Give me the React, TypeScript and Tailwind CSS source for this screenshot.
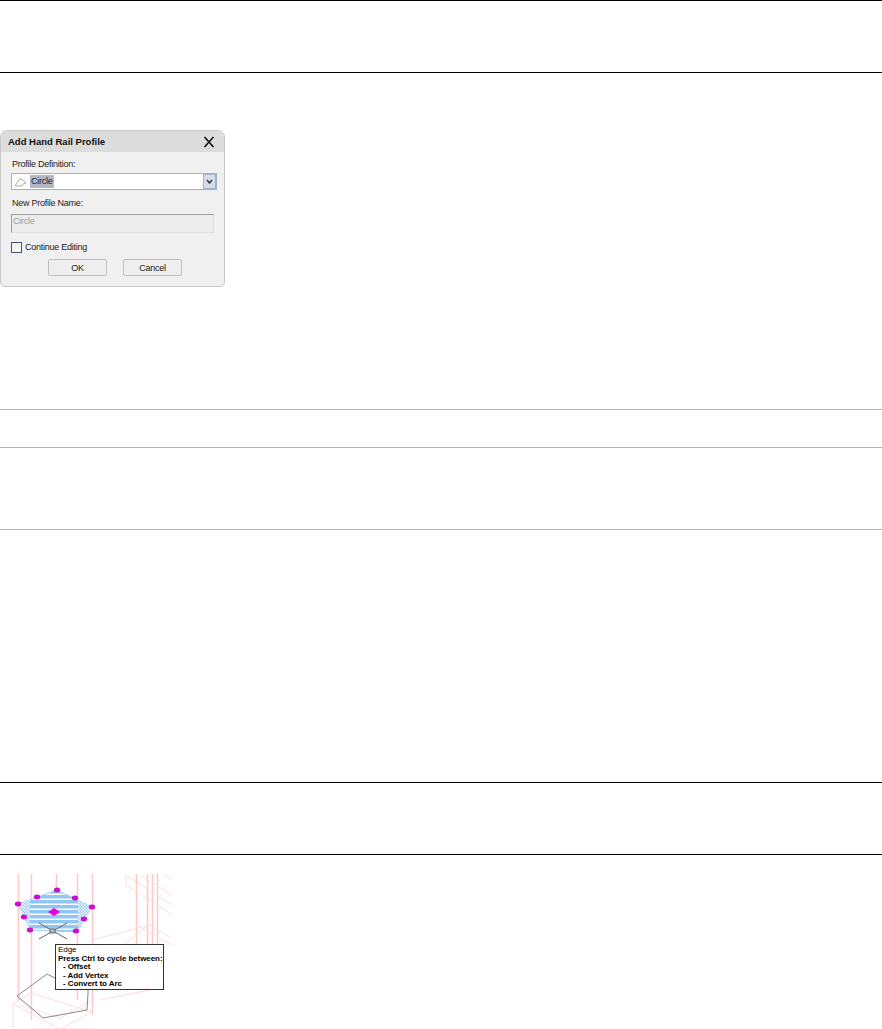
// Manual page: rules, the Add Hand Rail Profile dialog and the edge grip figure
const FONT = "font-['Liberation_Sans',Arial,sans-serif]";

function HandRailDialog() {
  return (
    <div className={`w-[225px] h-[157px] rounded-t-[7px] rounded-b-[5px] border border-[#c8c8c8] bg-[#f0f0f0] overflow-hidden text-[9px] leading-[12px] tracking-[-0.25px] text-[#222] ${FONT}`}>
      <div className="h-[21px] bg-[#dcdcdc] flex items-center justify-between pl-[7px] pr-[9px]">
        <span className="font-bold text-[#111] text-[9.5px] tracking-normal">Add Hand Rail Profile</span>
        <svg width="12" height="12" viewBox="0 0 12 12" stroke="#111" strokeWidth="1.6">
          <path d="M1.5 1 L10.5 11 M10.5 1 L1.5 11" />
        </svg>
      </div>
      <div className="pl-[10px] pr-[8px] pt-[6px] flex flex-col">
        <div className="h-[12px] pl-[1px]">Profile Definition:</div>
        <div className="mt-[3px] h-[17px] w-[206px] border border-[#9db4c8] bg-white flex items-center pl-[2px]">
          <svg width="14" height="10" viewBox="0 0 14 10" fill="none" stroke="#aaa" strokeWidth="1">
            <path d="M1 9 L6 1.5 L9 3 L12 6 L9 7 L8 9 Z" />
          </svg>
          <span className="ml-[2px] bg-[#b4b8c4] px-[1px] h-[13px] leading-[13px]">Circle</span>
          <div className="ml-auto w-[13px] h-[15px] bg-[#d8dce8] border border-[#a8b0c8] flex items-center justify-center">
            <svg width="7" height="5" viewBox="0 0 7 5" fill="none" stroke="#334" strokeWidth="1.5">
              <path d="M1 1 L3.5 4 L6 1" />
            </svg>
          </div>
        </div>
        <div className="mt-[7px] h-[12px] pl-[1px]">New Profile Name:</div>
        <div className="mt-[5px] h-[19px] w-[203px] border-t border-l border-[#a0a0a0] border-r border-r-[#e0e0e0] border-b border-b-[#e0e0e0] bg-[#ececec] pl-[1px] text-[#a0a0a0]">
          Circle
        </div>
        <div className="mt-[8px] flex items-center gap-[3px]">
          <div className="w-[11px] h-[11px] border border-[#3c5a78] bg-[#f4f4f4]" />
          <span>Continue Editing</span>
        </div>
        <div className="mt-[6px] pl-[37px] flex gap-[16px]">
          <div className="w-[59px] h-[17px] border border-[#c0c0c0] rounded-[2px] bg-[#eeeeee] flex items-center justify-center">OK</div>
          <div className="w-[59px] h-[17px] border border-[#c0c0c0] rounded-[2px] bg-[#eeeeee] flex items-center justify-center">Cancel</div>
        </div>
      </div>
    </div>
  );
}

function EdgeFigure() {
  const grips = [
    [57, 890], [37, 897], [75, 898], [18, 904], [92, 907], [24, 917], [84, 919], [30, 930], [76, 931],
  ];
  return (
    <div className="relative w-[172px] h-[155px]">
      {/* viewBox keeps page coordinates so the drawing is easy to compare */}
      <svg width="172" height="155" viewBox="0 874 172 155" fill="none">
        <defs>
          <pattern id="stripes" width="6" height="5" patternUnits="userSpaceOnUse">
            <rect width="6" height="3.5" fill="#8fc6f5" />
          </pattern>
          <pattern id="hatch" width="3" height="3" patternUnits="userSpaceOnUse">
            <rect width="1.5" height="1.5" fill="#8fc6f5" />
            <rect x="1.5" y="1.5" width="1.5" height="1.5" fill="#8fc6f5" />
          </pattern>
        </defs>
        <g stroke="#ffc8c8" strokeWidth="1.5">
          <path d="M18.5 874V1000M31.5 874V1020M56.5 874V890M77.5 874V1000M92.5 874V1015" />
          <path d="M136.5 874V960M147.5 874V990M152.5 874V950M157.5 874V950" />
        </g>
        <g stroke="#ffdcdc" strokeWidth="1">
          <path d="M126 875L172 905M126 885L172 915M126 875V885M140 875L172 895M163 874L172 880" />
          <path d="M92 940L150 925L172 938M110 955L150 924M136 925L172 945" />
          <path d="M13 1004L31 993L92 1012L60 1029M13 1004V1028M13 1004L60 1029M92 1000L60 1018L20 1005M31 1029H92M100 1000L150 990" />
        </g>
        <polygon points="57,890 92,907 77,932 30,930 18,904" fill="#ffffff" />
        <polygon points="57,890 92,907 77,932 30,930 18,904" fill="url(#stripes)" stroke="#a8d0f4" />
        <polygon points="18,904 30,900 30,930" fill="#ffffff" />
        <polygon points="18,904 30,900 30,930" fill="url(#hatch)" />
        <polygon points="92,907 78,900 78,932" fill="#ffffff" />
        <polygon points="92,907 78,900 78,932" fill="url(#hatch)" />
        <path d="M39 923L67 939M67 923L39 939" stroke="#666" strokeWidth="1" />
        <rect x="50" y="929" width="5" height="4" fill="#a8c8a8" stroke="#667" strokeWidth="1" />
        <polygon points="48,912 54,908 60,912 54,916" fill="#e800e0" />
        {grips.map(([x, y]) => (
          <ellipse key={`${x}-${y}`} cx={x} cy={y} rx="3" ry="2.2" fill="#e800e0" stroke="#80208a" strokeWidth="0.5" />
        ))}
        <path d="M17 996L47 974L55 978M88 980V993L87 1010L43 1018L17 996" stroke="#888" strokeWidth="1" />
      </svg>
      <div className={`absolute left-[55px] top-[70px] w-[109px] h-[46px] border border-[#333] bg-white pl-[2px] pt-[1px] text-[8px] leading-[8.6px] tracking-[-0.08px] text-black whitespace-nowrap ${FONT}`}>
        <div>Edge</div>
        <div className="font-bold">Press Ctrl to cycle between:</div>
        <div className="font-bold pl-[5px]">- Offset</div>
        <div className="font-bold pl-[5px]">- Add Vertex</div>
        <div className="font-bold pl-[5px]">- Convert to Arc</div>
      </div>
    </div>
  );
}

export default function App() {
  return (
    <div className="w-[882px] h-[1029px] bg-white overflow-hidden flex flex-col">
      <div className="h-px bg-black" />
      <div className="h-[71px]" />
      <div className="h-px bg-black" />
      <div className="h-[336px] pt-[57px]">
        <HandRailDialog />
      </div>
      <div className="h-px bg-[#b4b4b4]" />
      <div className="h-[37px]" />
      <div className="h-px bg-[#b4b4b4]" />
      <div className="h-[81px]" />
      <div className="h-px bg-[#b4b4b4]" />
      <div className="h-[252px]" />
      <div className="h-px bg-black" />
      <div className="h-[71px]" />
      <div className="h-px bg-black" />
      <div className="pt-[19px]">
        <EdgeFigure />
      </div>
    </div>
  );
}
